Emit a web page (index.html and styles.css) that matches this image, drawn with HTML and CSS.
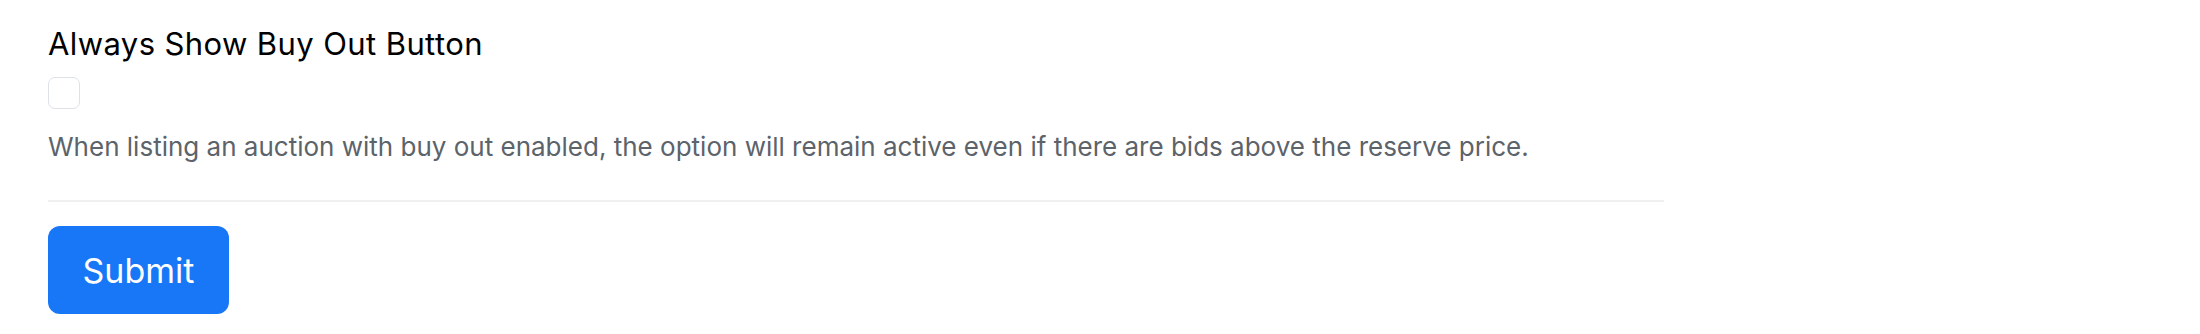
FILE: index.html
```html
<!DOCTYPE html>
<html lang="en">

<head>
  <meta charset="UTF-8" />
  <title>Settings</title>
  <link rel="stylesheet" href="styles.css">
</head>

<body>
  <form class="settings">
    <div class="field">
      <label class="field-label" for="buyout">Always Show Buy Out Button</label>
      <input type="checkbox" id="buyout" class="check" />
      <div class="help">When listing an auction with buy out enabled, the option will remain active even if there are bids above the reserve price.</div>
    </div>

    <hr class="divider" />

    <button type="submit" class="btn-submit">Submit</button>
  </form>
</body>

</html>
```

FILE: styles.css
```css
body {
  margin: 0;
  padding: 0;
  font-family: Inter, 'Noto Sans', sans-serif;
  background: #fff;
  color: #000;
}

.settings {
  width: 1616px;
  padding: 24px 0 0 48px;
}

.field {
  display: flex;
  flex-direction: column;
  align-items: flex-start;
}

.field-label {
  font-size: 31px;
  line-height: 40px;
  letter-spacing: 0.4px;
  color: #000;
}

.check {
  appearance: none;
  width: 32px;
  height: 32px;
  margin: 13px 0 0;
  border: 1.5px solid #dee2e6;
  border-radius: 7px;
  background: #fff;
}

.help {
  margin-top: 20px;
  font-size: 26px;
  line-height: 36px;
  color: #5c636a;
}

.divider {
  margin: 35px 0 24px;
  border: none;
  border-top: 2px solid #f0f0f0;
}

.btn-submit {
  width: 181px;
  height: 88px;
  font-family: inherit;
  font-size: 34px;
  color: #fff;
  background-color: #1877f7;
  border: none;
  border-radius: 12px;
  cursor: pointer;
}
```
